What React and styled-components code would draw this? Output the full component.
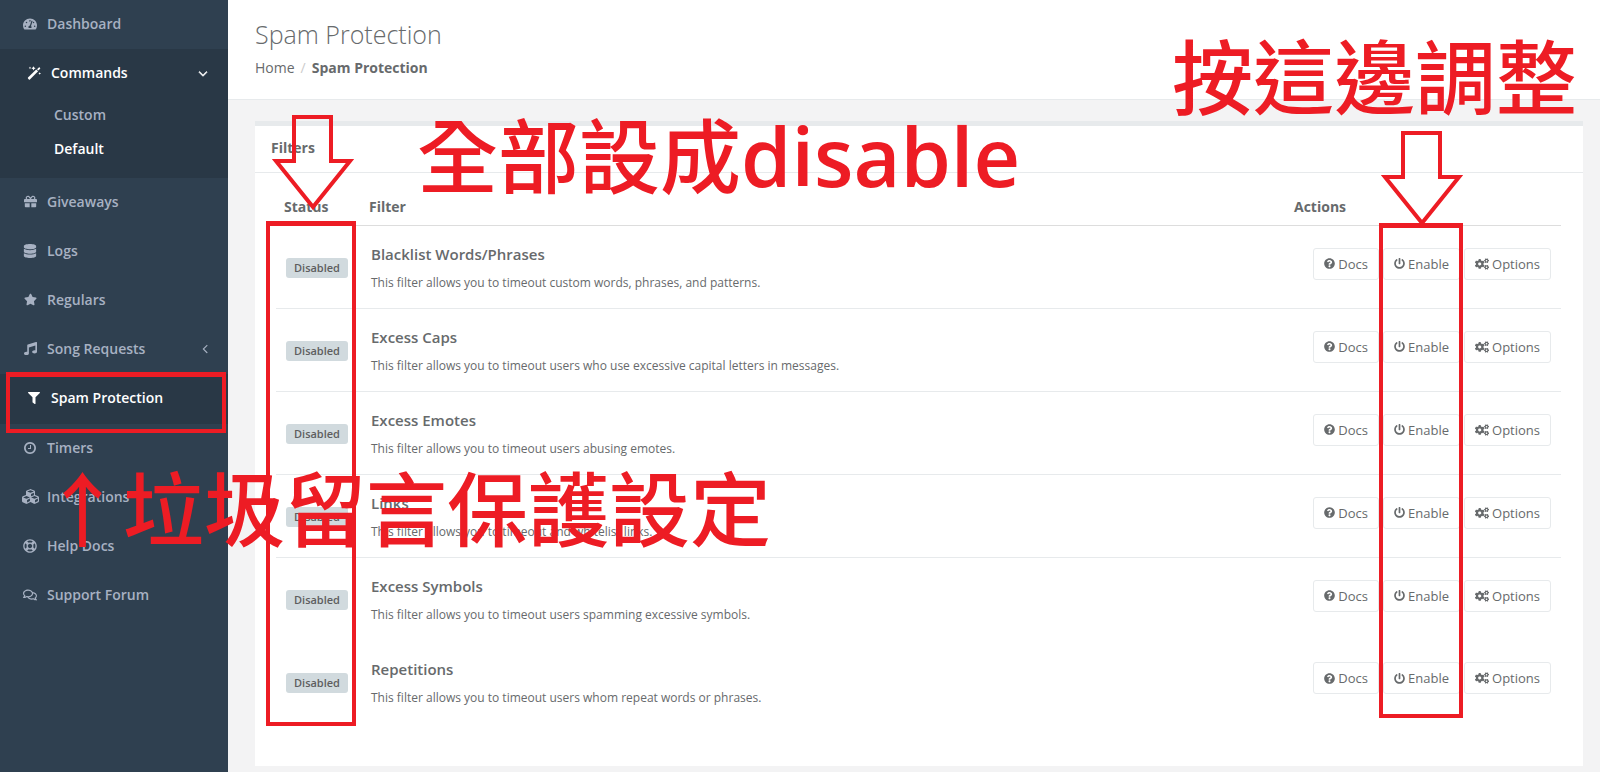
import styled, { createGlobalStyle } from "styled-components";
import {
  FaTachometerAlt,
  FaGift,
  FaDatabase,
  FaStar,
  FaMusic,
  FaFilter,
  FaCubes,
  FaRegLifeRing,
  FaRegComments,
  FaQuestionCircle,
  FaPowerOff,
  FaCogs,
} from "react-icons/fa";

const GlobalStyle = createGlobalStyle`
  * {
    box-sizing: border-box;
  }
  body {
    margin: 0;
    background: #f3f3f4;
    color: #676a6c;
    font-family: "Open Sans", "Noto Sans CJK TC", sans-serif;
    font-size: 14px;
    line-height: 20px;
  }
`;

const Page = styled.div`
  position: relative;
  display: flex;
  min-height: 100vh;
`;

const Sidebar = styled.nav`
  flex: 0 0 228px;
  background: #2f4050;
`;

const NavItem = styled.div`
  background: ${(props) => (props.$active ? "#293846" : "transparent")};
  border-left: ${(props) => (props.$active ? "4px solid #293846" : "none")};
  padding-bottom: ${(props) => (props.$open ? "11px" : "0")};
`;

const NavLink = styled.a`
  display: flex;
  align-items: center;
  height: ${(props) => (props.$active ? "50px" : "49px")};
  padding: 0 20px 2px 21px;
  color: ${(props) => (props.$active ? "#fff" : "#a7b1c2")};
  font-weight: 600;
  text-decoration: none;
`;

const NavIcon = styled.span`
  display: flex;
  justify-content: center;
  flex: 0 0 18px;
  margin-right: 8px;
`;

const NavText = styled.span`
  flex: 1;
`;

const SubLink = styled.a`
  display: block;
  padding: 6px 10px 8px 50px;
  color: ${(props) => (props.$active ? "#fff" : "#a7b1c2")};
  font-weight: 600;
  text-decoration: none;
`;

const Content = styled.main`
  flex: 1;
  min-width: 0;
`;

const Heading = styled.header`
  height: 100px;
  padding: 19px 27px 0;
  background: #fff;
  border-bottom: 1px solid #e7eaec;
`;

const Title = styled.h2`
  margin: 0 0 9px;
  font-size: 25px;
  font-weight: 300;
  line-height: 30px;
`;

const Breadcrumb = styled.div`
  display: flex;
  gap: 6px;

  a {
    color: inherit;
    text-decoration: none;
  }
  span {
    color: #ccc;
  }
`;

const Panel = styled.section`
  margin: 21px 17px 5px 27px;
  background: #fff;
  border-top: 5px solid #e7eaec;
`;

const PanelTitle = styled.h5`
  margin: 0;
  padding: 12px 16px 14px;
  border-bottom: 1px solid #e7eaec;
  font-size: 14px;
  font-weight: 700;
`;

const PanelBody = styled.div`
  padding: 16px 22px 43px 21px;
`;

const Table = styled.table`
  width: 100%;
  table-layout: fixed;
  border-collapse: collapse;
`;

const HeadCell = styled.th`
  width: ${(props) => props.$width || "auto"};
  height: 36px;
  padding: 0 8px;
  border-bottom: 1px solid #ddd;
  text-align: left;
  font-weight: 700;
`;

const Row = styled.tr`
  height: 83px;

  &:not(:nth-last-child(-n + 2)) td {
    border-bottom: 1px solid #e7eaec;
  }
`;

const Cell = styled.td`
  padding: 2px 10px 0;
`;

const ActionCell = styled.td`
  padding: 22px 10px 0;
  vertical-align: top;
`;

const Badge = styled.span`
  display: inline-block;
  padding: 0 8px;
  border-radius: 3px;
  background: #d1dade;
  color: #5e5e5e;
  font-size: 11px;
  font-weight: 600;
`;

const FilterName = styled.h4`
  margin: 2px 0 9px;
  font-size: 15px;
  font-weight: 600;
`;

const FilterText = styled.p`
  margin: 0;
  font-size: 12px;
`;

const Buttons = styled.div`
  display: flex;
  justify-content: flex-end;
  gap: 4px;
`;

const Button = styled.button`
  display: flex;
  align-items: center;
  gap: 3px;
  height: 32px;
  padding: 0 10px;
  border: 1px solid #e7eaec;
  border-radius: 3px;
  background: #fff;
  color: #676a6c;
  font: inherit;
  font-size: 13px;
  cursor: pointer;
`;

const Mark = styled.div`
  position: absolute;
  left: ${(props) => props.$x}px;
  top: ${(props) => props.$y}px;
  width: ${(props) => props.$w}px;
  height: ${(props) => props.$h}px;
  border: 4px solid #ed1c24;
  border-top-width: 5px;
  pointer-events: none;
`;

const Note = styled.p`
  position: absolute;
  left: ${(props) => props.$x}px;
  top: ${(props) => props.$y}px;
  margin: 0;
  color: #ed1c24;
  font-size: 81px;
  font-weight: 500;
  line-height: 90px;
  white-space: nowrap;
  pointer-events: none;

  b {
    font-weight: 600;
  }
`;

const ArrowSvg = styled.svg`
  position: absolute;
  left: ${(props) => props.$x}px;
  top: ${(props) => props.$y}px;
  pointer-events: none;
`;

const Arrow = ({ x, y }) => (
  <ArrowSvg $x={x} $y={y} width="82" height="96" viewBox="0 0 82 96">
    <path
      d="M22 2H59V46H78L41 92L4 46H22Z"
      fill="none"
      stroke="#ed1c24"
      strokeWidth="4"
    />
  </ArrowSvg>
);

const WandIcon = ({ size }) => (
  <svg width={size} height={size} viewBox="0 0 14 14" fill="currentColor">
    <path d="M1 11.6L9.2 3.4L11.1 5.3L2.9 13.5Q2.4 13.9 1.9 13.5L1 12.6Q.6 12.1 1 11.6Z" />
    <path d="M10 3.2L11.8 1.4Q12.3 1 12.7 1.4L13.1 1.9Q13.5 2.3 13.1 2.7L11.4 4.5Z" />
    <path d="M3 .6L3.4 1.5L4.3 1.9L3.4 2.3L3 3.2L2.6 2.3L1.7 1.9L2.6 1.5ZM6.5 .2L7.2 1.6L8.6 2.3L7.2 3L6.5 4.4L5.8 3L4.4 2.3L5.8 1.6ZM12.7 6.2L13.1 7.1L14 7.5L13.1 7.9L12.7 8.8L12.3 7.9L11.4 7.5L12.3 7.1Z" />
  </svg>
);

const ClockIcon = ({ size }) => (
  <svg width={size} height={size} viewBox="0 128 1536 1536" fill="currentColor">
    <path d="M896 544v448q0 14-9 23t-23 9h-320q-14 0-23-9t-9-23v-64q0-14 9-23t23-9h224v-352q0-14 9-23t23-9h64q14 0 23 9t9 23zm416 352q0-148-73-273t-198-198-273-73-273 73-198 198-73 273 73 273 198 198 273 73 273-73 198-198 73-273zm224 0q0 209-103 385.5t-279.5 279.5-385.5 103-385.5-103-279.5-279.5-103-385.5 103-385.5 279.5-279.5 385.5-103 385.5 103 279.5 279.5 103 385.5z" />
  </svg>
);

const AngleDown = () => (
  <svg width="10" height="15" viewBox="0 0 1152 1792" fill="currentColor">
    <path
      d="M1075 736q0 13-10 23l-466 466q-10 10-23 10t-23-10l-466-466q-10-10-10-23t10-23l50-50q10-10 23-10t23 10l393 393 393-393q10-10 23-10t23 10l50 50q10 10 10 23z"
      stroke="currentColor"
      strokeWidth="60"
    />
  </svg>
);

const AngleLeft = () => (
  <svg width="6" height="15" viewBox="0 0 640 1792" fill="currentColor">
    <path d="M627 544q0 13-10 23l-393 393 393 393q10 10 10 23t-10 23l-50 50q-10 10-23 10t-23-10l-466-466q-10-10-10-23t10-23l466-466q10-10 23-10t23 10l50 50q10 10 10 23z" />
  </svg>
);

const menu = [
  { label: "Dashboard", icon: FaTachometerAlt, size: 14 },
  {
    label: "Commands",
    icon: WandIcon,
    size: 14,
    active: true,
    arrow: AngleDown,
    children: ["Custom", "Default"],
  },
  { label: "Giveaways", icon: FaGift, size: 13 },
  { label: "Logs", icon: FaDatabase, size: 14 },
  { label: "Regulars", icon: FaStar, size: 13 },
  { label: "Song Requests", icon: FaMusic, size: 13, arrow: AngleLeft },
  { label: "Spam Protection", icon: FaFilter, size: 12, active: true },
  { label: "Timers", icon: ClockIcon, size: 12 },
  { label: "Integrations", icon: FaCubes, size: 17 },
  { label: "Help Docs", icon: FaRegLifeRing, size: 14 },
  { label: "Support Forum", icon: FaRegComments, size: 14 },
];

const filters = [
  {
    name: "Blacklist Words/Phrases",
    text: "This filter allows you to timeout custom words, phrases, and patterns.",
  },
  {
    name: "Excess Caps",
    text: "This filter allows you to timeout users who use excessive capital letters in messages.",
  },
  {
    name: "Excess Emotes",
    text: "This filter allows you to timeout users abusing emotes.",
  },
  {
    name: "Links",
    text: "This filter allows you to timeout and whitelist links.",
  },
  {
    name: "Excess Symbols",
    text: "This filter allows you to timeout users spamming excessive symbols.",
  },
  {
    name: "Repetitions",
    text: "This filter allows you to timeout users whom repeat words or phrases.",
  },
];

const MenuItem = ({ item }) => {
  const Icon = item.icon;
  const ArrowIcon = item.arrow;
  return (
    <NavItem $active={item.active} $open={!!item.children}>
      <NavLink href="#" $active={item.active}>
        <NavIcon>
          <Icon size={item.size} />
        </NavIcon>
        <NavText>{item.label}</NavText>
        {ArrowIcon && <ArrowIcon />}
      </NavLink>
      {item.children?.map((child) => (
        <SubLink href="#" key={child} $active={child === "Default"}>
          {child}
        </SubLink>
      ))}
    </NavItem>
  );
};

const App = () => {
  return (
    <Page>
      <GlobalStyle />
      <Sidebar>
        {menu.map((item) => (
          <MenuItem item={item} key={item.label} />
        ))}
      </Sidebar>
      <Content>
        <Heading>
          <Title>Spam Protection</Title>
          <Breadcrumb>
            <a href="#">Home</a>
            <span>/</span>
            <strong>Spam Protection</strong>
          </Breadcrumb>
        </Heading>
        <Panel>
          <PanelTitle>Filters</PanelTitle>
          <PanelBody>
            <Table>
              <thead>
                <tr>
                  <HeadCell $width="85px">Status</HeadCell>
                  <HeadCell>Filter</HeadCell>
                  <HeadCell $width="275px">Actions</HeadCell>
                </tr>
              </thead>
              <tbody>
                {filters.map((filter) => (
                  <Row key={filter.name}>
                    <Cell>
                      <Badge>Disabled</Badge>
                    </Cell>
                    <Cell>
                      <FilterName>{filter.name}</FilterName>
                      <FilterText>{filter.text}</FilterText>
                    </Cell>
                    <ActionCell>
                      <Buttons>
                        <Button>
                          <FaQuestionCircle size={11} />
                          Docs
                        </Button>
                        <Button>
                          <FaPowerOff size={11} />
                          Enable
                        </Button>
                        <Button>
                          <FaCogs size={14} />
                          Options
                        </Button>
                      </Buttons>
                    </ActionCell>
                  </Row>
                ))}
              </tbody>
            </Table>
          </PanelBody>
        </Panel>
      </Content>

      <Mark $x={6} $y={372} $w={220} $h={61} />
      <Mark $x={266} $y={221} $w={90} $h={505} />
      <Mark $x={1379} $y={223} $w={84} $h={495} />
      <Arrow x={272} y={115} />
      <Arrow x={1381} y={131} />
      <Note $x={417} $y={111}>
        全部設成<b>disable</b>
      </Note>
      <Note $x={1172} $y={32}>按這邊調整</Note>
      <Note $x={42} $y={464}>↑垃圾留言保護設定</Note>
    </Page>
  );
};

export default App;
